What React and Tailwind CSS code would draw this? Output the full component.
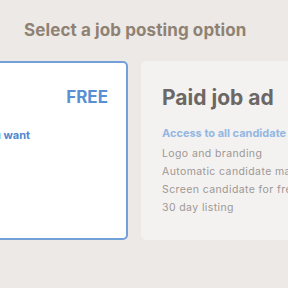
import React from 'react';

const features = [
  'Logo and branding',
  'Automatic candidate matches',
  'Screen candidate for free',
  '30 day listing',
];

export default function App() {
  return (
    <div
      className="w-[288px] h-[288px] overflow-hidden bg-[#ede9e6]"
      style={{ fontFamily: 'Inter, "Noto Sans", sans-serif' }}
    >
      {/* 標題 */}
      <h1 className="pt-[19px] pl-[24px] text-[17px] font-bold leading-[22px] tracking-[0.1px] text-[#8f8274] whitespace-nowrap">
        Select a job posting option
      </h1>

      {/* 選項卡片 */}
      <div className="flex gap-[13px] mt-[20px] ml-[-100px]">
        <div className="w-[228px] h-[179px] shrink-0 bg-white border-2 border-[#72a0d9] rounded-[5px]">
          <div className="flex justify-end pr-[18px] pt-[24px]">
            <span className="text-[17px] font-bold text-[#5a8fd4] leading-[20px]">FREE</span>
          </div>
          <p className="mt-[20px] pl-[13px] text-[11px] font-bold text-[#4f88d0] whitespace-nowrap leading-[16px]">
            Post the job you want
          </p>
        </div>

        <div className="w-[200px] h-[179px] shrink-0 bg-[#f4f2f1] rounded-[5px] pl-[21px] pt-[24px]">
          <h2 className="text-[21px] font-bold text-[#6b6764] leading-[26px] whitespace-nowrap">
            Paid job ad
          </h2>
          <p className="mt-[15px] text-[11px] font-bold text-[#93b7e2] leading-[14px] whitespace-nowrap">
            Access to all candidate community
          </p>
          <ul className="mt-[7px] flex flex-col gap-[4px]">
            {features.map((f) => (
              <li key={f} className="text-[10.5px] tracking-[0.4px] text-[#9d9894] leading-[14px] whitespace-nowrap">
                {f}
              </li>
            ))}
          </ul>
        </div>
      </div>
    </div>
  );
}
